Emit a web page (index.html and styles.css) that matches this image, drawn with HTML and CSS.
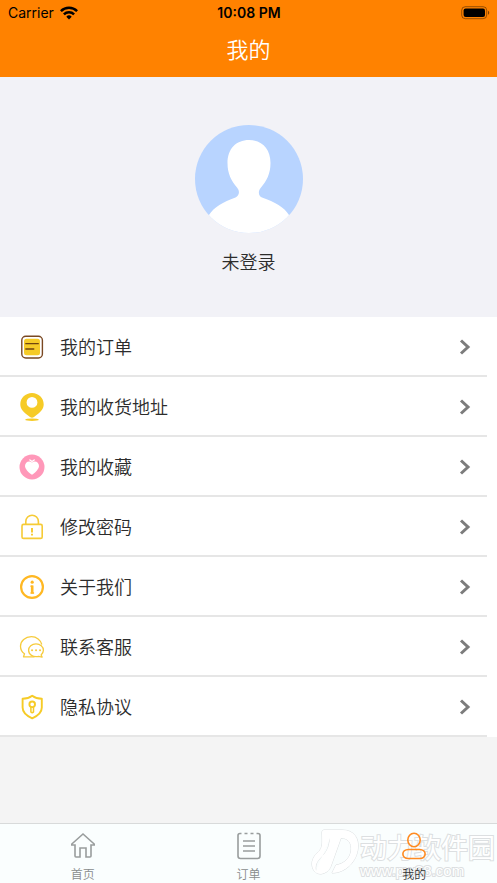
FILE: index.html
```html
<!DOCTYPE html>
<html lang="zh-CN">
<head>
<meta charset="utf-8">
<meta name="viewport" content="width=device-width, initial-scale=1">
<title>我的</title>
<link rel="stylesheet" href="styles.css">
</head>
<body>
<header class="top">
  <div class="status">
    <div class="carrier">
      <span>Carrier</span>
      <svg width="18" height="14" viewBox="0 0 18 14" fill="none" stroke="#000" stroke-width="2.5" aria-hidden="true">
        <path d="M.9 5.1a11.6 11.6 0 0 1 16.2 0"/>
        <path d="M3.900 8.400a7.300 7.300 0 0 1 10.200 0"/>
        <path d="M9 13.400l-2.700-2.700a3.800 3.800 0 0 1 5.400 0z" fill="#000" stroke="none"/>
      </svg>
    </div>
    <span class="clock">10:08 PM</span>
    <svg class="battery" width="29" height="14" viewBox="0 0 29 14" aria-hidden="true">
      <rect x=".7" y=".7" width="25" height="12" rx="3.600" fill="none" stroke="#000" stroke-opacity=".4"/>
      <rect x="2.600" y="2.400" width="21.400" height="8.600" rx="2"/>
      <path d="M27 4.700c1.700.7 1.700 3.300 0 4z" fill-opacity=".5"/>
    </svg>
  </div>
  <h1>我的</h1>
</header>
<main>
  <section class="profile">
    <svg width="108" height="108" viewBox="0 0 108 108" aria-hidden="true">
      <clipPath id="disc"><circle cx="54" cy="54" r="54"/></clipPath>
      <g clip-path="url(#disc)">
        <path fill="#b8d4ff" d="M0 0h108v108H0z"/>
        <path fill="#fff" d="M54 15c13 0 21.500 9 21.500 23 0 11-4 18-9.500 24.500-3 3.500-3 8 1 10C80 77 89 82 94 90l6 18H8l6-18c5-8 14-13 26.500-17.500 4-2 4.500-6.500 1.500-10C36.500 56 32.500 49 32.500 38 32.500 24 41 15 54 15z"/>
      </g>
    </svg>
    <p>未登录</p>
  </section>
  <nav class="menu">
    <a href="#orders">
      <svg class="icon" viewBox="0 0 28 28" aria-hidden="true"><rect x="3.800" y="3.200" width="20.600" height="21.800" rx="4" fill="#fff" stroke="#7a4822" stroke-width="1.400"/><rect x="6" y="5.800" width="16" height="16.500" rx="2.500" fill="#f6cb27"/><path d="M7.800 10.700h12.500M7.800 16h8" stroke="#70450f" stroke-width="1.300" stroke-linecap="round"/></svg>
      <span>我的订单</span><svg class="arrow" viewBox="0 0 12 16" aria-hidden="true"><path d="M2 1.500 9 8l-7 6.500"/></svg>
    </a>
    <a href="#address">
      <svg class="icon" viewBox="0 0 28 28" fill="#f6cb27" aria-hidden="true"><path fill-rule="evenodd" d="M14 0c6.600 0 11.700 5 11.700 11.200 0 5.200-3.300 7.800-9.700 12.800q-2 1.600-4 0C5.600 19 2.300 16.400 2.300 11.200 2.300 5 7.400 0 14 0zm0 4a5.400 5.400 0 1 0 0 10.800A5.400 5.400 0 0 0 14 4z"/><ellipse cx="14" cy="26.700" rx="6.800" ry="1.300"/></svg>
      <span>我的收货地址</span><svg class="arrow" viewBox="0 0 12 16" aria-hidden="true"><path d="M2 1.500 9 8l-7 6.500"/></svg>
    </a>
    <a href="#favorites">
      <svg class="icon" viewBox="0 0 28 28" aria-hidden="true"><circle cx="14" cy="14" r="12.500" fill="#ff98b9"/><path fill="#fff" d="M14 9.500c3-2.500 7-.4 7 3.400 0 3-3.500 6-5.800 8.200q-1.200 1-2.400 0C10.500 18.900 7 15.900 7 12.900 7 9.100 11 7 14 9.500z"/><path d="M11.900 7l2.100 1.500L16.200 7" fill="none" stroke="#fff" stroke-width="1.400" stroke-linecap="round"/></svg>
      <span>我的收藏</span><svg class="arrow" viewBox="0 0 12 16" aria-hidden="true"><path d="M2 1.500 9 8l-7 6.500"/></svg>
    </a>
    <a href="#password">
      <svg class="icon" viewBox="0 0 28 28" fill="none" stroke="#f6cb36" stroke-width="1.600" aria-hidden="true"><rect x="4" y="11.400" width="20.200" height="14" rx="1.500"/><path d="M7.800 11V8.500a6.300 6.300 0 0 1 12.600 0V11"/><path d="M14 15v4.500m0 1.300v1.800" stroke-width="2"/></svg>
      <span>修改密码</span><svg class="arrow" viewBox="0 0 12 16" aria-hidden="true"><path d="M2 1.500 9 8l-7 6.500"/></svg>
    </a>
    <a href="#about">
      <svg class="icon" viewBox="0 0 28 28" fill="none" stroke="#ffb823" stroke-width="2.200" aria-hidden="true"><circle cx="14" cy="14" r="10.900"/><path d="M12.500 13.200H14V20m-1.500 0h3.600" stroke-width="1.400"/><path d="M14.200 12.500V20.500" stroke-width="2.600"/><circle cx="14.200" cy="9.200" r="1.600" fill="#ffb823" stroke="none"/></svg>
      <span>关于我们</span><svg class="arrow" viewBox="0 0 12 16" aria-hidden="true"><path d="M2 1.500 9 8l-7 6.500"/></svg>
    </a>
    <a href="#service">
      <svg class="icon" viewBox="0 0 28 28" fill="none" stroke="#f6cb3c" stroke-width="1.300" stroke-linejoin="round" aria-hidden="true"><path d="M23.800 11.500C22.800 7 18.500 3.700 13.400 3.700 7.300 3.700 2.500 7.800 2.500 13.200c0 3.200 1.600 5.900 4 7.600L5.500 23.800h11"/><path d="M18 10.800c4.200 0 7.400 2.900 7.400 6.500 0 2-1 3.500-2.300 4.600l1 2.200-3.500-.7c-5.700 1.200-10-1.900-10-6.100 0-3.600 3.200-6.500 7.400-6.500z"/><path d="M14 17.200h.1m3.900 0h.1m3.900 0h.1" stroke-width="1.900" stroke-linecap="round"/></svg>
      <span>联系客服</span><svg class="arrow" viewBox="0 0 12 16" aria-hidden="true"><path d="M2 1.500 9 8l-7 6.500"/></svg>
    </a>
    <a href="#privacy">
      <svg class="icon" viewBox="0 0 28 28" fill="none" stroke="#f6cb27" stroke-width="1.900" stroke-linejoin="round" aria-hidden="true"><path d="M14.200 2.700c3 2.200 6 3 9.600 3.100v8.700c0 4.700-4.100 8.400-9.600 10.800-5.500-2.400-9.600-6.100-9.600-10.800V5.800c3.600-.1 6.600-.9 9.600-3.100z"/><circle cx="14.200" cy="11.300" r="2.800"/><path d="M12.900 14v5q1.300 1.300 2.600 0v-5" stroke-width="1.500"/></svg>
      <span>隐私协议</span><svg class="arrow" viewBox="0 0 12 16" aria-hidden="true"><path d="M2 1.500 9 8l-7 6.500"/></svg>
    </a>
  </nav>
</main>
<footer>
  <div class="watermark">
    <svg width="50" height="48" viewBox="0 0 50 48" aria-hidden="true"><path fill-rule="evenodd" d="M12 3q0-2 2-2h18c12 0 17 8 16 18-1 13-12 25-26 25l4-8c8-1 14-7 15-14 1-8-3-13-10-13L21 37c-2 5-5 7-10 8-6 0-9-5-9-10 0-6 4-10 8-14 3-4 2-9 2-18zM6 42c-2-9 5-13 9-18 3-4 4-7 5-15"/></svg>
    <div><strong>动力软件园</strong><small>www.pw88.com</small></div>
  </div>
  <nav class="tabs">
    <a href="#home">
      <svg viewBox="0 0 28 28" aria-hidden="true"><path d="M14 2 2.800 12v1H6v11q0 1 1 1h4v-9h6v9h4q1 0 1-1V13h3.200v-1z"/></svg>
      <span>首页</span>
    </a>
    <a href="#order-list">
      <svg viewBox="0 0 28 28" aria-hidden="true"><path d="M6.500 1.500h-1.500Q3 1.500 3 3.500v20.500q0 2.500 2.500 2.500h17Q25 26.500 25 24V3.500q0-2-2-2h-1.500M9.500 1.500h3m3 0h3M8 9h12M8 14h12M8 19h12"/></svg>
      <span>订单</span>
    </a>
    <a href="#mine" class="active" aria-current="page">
      <svg viewBox="0 0 28 28" aria-hidden="true"><ellipse cx="14" cy="8" rx="6.200" ry="6.800"/><path d="M8.500 17.500h11c7.500 0 7.500 9 0 9h-11c-7.500 0-7.500-9 0-9z"/></svg>
      <span>我的</span>
    </a>
  </nav>
</footer>
</body>
</html>
```
FILE: styles.css
```css
* {
  box-sizing: border-box;
}

body {
  display: flex;
  flex-direction: column;
  min-height: 100vh;
  margin: 0;
  background: #f4f4f4;
  color: #2c2c2c;
  font-family: "Noto Sans CJK SC", sans-serif;
  font-weight: 350;
}

a {
  color: inherit;
  text-decoration: none;
}

.top {
  padding-bottom: 7px;
  background: #ff8200;
}

.status {
  display: grid;
  grid-template-columns: 1fr auto 1fr;
  align-items: center;
  height: 26px;
  padding: 0 7px 0 8px;
  color: #000;
  font: 14px/26px Inter, sans-serif;
}

.carrier {
  display: flex;
  align-items: center;
  gap: 6px;
}

.clock {
  font-weight: 600;
}

.battery {
  justify-self: end;
}

h1 {
  margin: 0;
  color: #fff;
  font-size: 22px;
  font-weight: 350;
  line-height: 44px;
  text-align: center;
}

.profile {
  display: flex;
  flex-direction: column;
  align-items: center;
  gap: 15px;
  padding: 48px 0 42px;
  background: #f2f2f7;
}

.profile p {
  margin: 0;
  font-size: 18px;
  line-height: 27px;
}

.menu {
  background: #fff;
}

.menu a {
  display: flex;
  align-items: center;
  gap: 14px;
  height: 60px;
  margin-right: 10px;
  padding: 1px 16px 0 18px;
  border-bottom: 2px solid #e6e6e6;
  font-size: 18px;
  line-height: 28px;
}

.menu span {
  padding-bottom: 2px;
}

.icon {
  width: 28px;
  height: 28px;
}

.arrow {
  width: 12px;
  height: 16px;
  margin-left: auto;
  fill: none;
  stroke: #7c7c7c;
  stroke-width: 3;
}

footer {
  position: relative;
  margin-top: auto;
  overflow: hidden;
  border-top: 1px solid #d8dada;
  background: #fafefe;
}

.tabs {
  position: relative;
  display: flex;
}

.tabs a {
  display: flex;
  flex: 1;
  flex-direction: column;
  align-items: center;
  gap: 4px;
  padding: 8px 0 0;
  color: #888c8c;
  font-size: 12px;
  line-height: 19px;
}

.tabs svg {
  width: 28px;
  height: 28px;
  fill: none;
  stroke: #999d9d;
  stroke-width: 1.6;
}

.tabs .active {
  color: #333;
}

.tabs .active svg {
  stroke: #ff8a20;
}

.watermark {
  position: absolute;
  top: 5px;
  right: 2px;
  display: flex;
  color: #fff;
  -webkit-text-stroke: 2px #dcdfe1;
  paint-order: stroke fill;
}

.watermark svg {
  fill: #fff;
  stroke: #dcdfe1;
}

.watermark div {
  display: flex;
  flex-direction: column;
}

.watermark strong {
  font-size: 27px;
  font-weight: 400;
  line-height: 36px;
}

.watermark small {
  font: 15px/12px "Liberation Sans", sans-serif;
}
```
